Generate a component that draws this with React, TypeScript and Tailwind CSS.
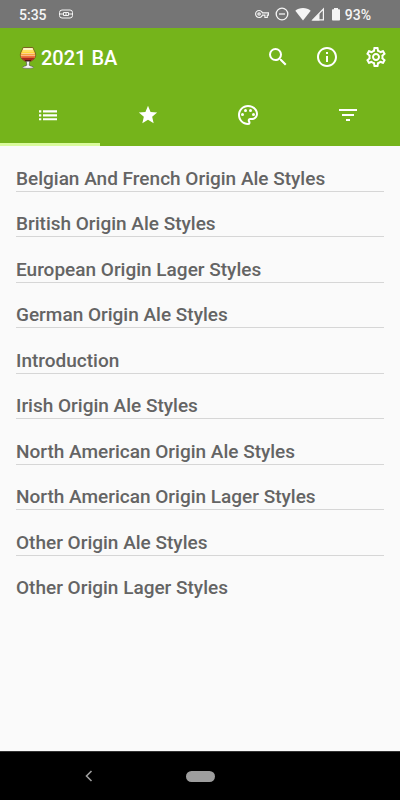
import type { ReactNode } from 'react';
import {
  MdFilterList,
  MdInfoOutline,
  MdOutlinePalette,
  MdOutlineSettings,
  MdOutlineVpnKey,
  MdSearch,
  MdStar,
} from 'react-icons/md';

const styleGroups = [
  'Belgian And French Origin Ale Styles',
  'British Origin Ale Styles',
  'European Origin Lager Styles',
  'German Origin Ale Styles',
  'Introduction',
  'Irish Origin Ale Styles',
  'North American Origin Ale Styles',
  'North American Origin Lager Styles',
  'Other Origin Ale Styles',
  'Other Origin Lager Styles',
];

const ListIcon = () => (
  <svg width="24" height="24" viewBox="0 0 24 24" fill="currentColor" aria-hidden="true">
    <path d="M3 7.300h2.300v2.100H3zM3 11.300h2.300v2.100H3zM3 15.200h2.300v2.100H3z" />
    <path d="M7 7.300h14v2.100H7zM7 11.300h14v2.100H7zM7 15.200h14v2.100H7z" />
  </svg>
);

const tabs = [
  { label: 'List', icon: <ListIcon /> },
  { label: 'Favorites', icon: <MdStar size={22} /> },
  { label: 'Colors', icon: <MdOutlinePalette size={24} /> },
  { label: 'Filter', icon: <MdFilterList size={24} /> },
];

const BeerGlass = () => (
  <svg width="18" height="24" viewBox="0 0 18 24" aria-hidden="true">
    <path
      d="M4.200 1.500h9.600c.7 2.500 2.900 4.500 2.900 7.500 0 3.300-2.600 5.600-5.700 6.500H7c-3.100-.9-5.700-3.200-5.700-6.500 0-3 2.200-5 2.900-7.500z"
      fill="#ffd83a"
      stroke="#6b4a24"
      strokeWidth="0.8"
    />
    <path d="M4.500 2h9l.6 2H3.900z" fill="#fff6c4" />
    <path d="M2.200 7h13.600l.5 2.400H1.700z" fill="#f9a23c" />
    <path d="M1.700 9.400h14.600l-.7 2.400H2.400z" fill="#ec5f36" />
    <path d="M2.400 11.800h13.200c-.9 1.400-1.700 2-2.900 2.600H5.300c-1.200-.6-2-1.200-2.900-2.600z" fill="#a8281f" />
    <path d="M5.300 14h7.400l-1.700 1.500H7z" fill="#4c120e" />
    <path d="M3.500 5h11M2.500 7.500h13M2 9.700h14" stroke="#fff1c9" strokeWidth="0.6" />
    <path
      d="M7.300 15.200h3.400l-.5 4c1 1.100 4.300 1 4.300 2.200 0 1.300-11 1.300-11 0 0-1.200 3.300-1.100 4.300-2.200z"
      fill="#f7f7f7"
      stroke="#4a4a4a"
      strokeWidth="0.6"
    />
  </svg>
);

const StatusBar = () => (
  <div className="flex h-7 items-center bg-[#757575] pl-[19px] pr-[29px] text-[#f5f5f5]">
    <span className="pt-px text-sm font-medium">5:35</span>
    <svg className="ml-3" width="14" height="10" viewBox="0 0 14 10" fill="none" stroke="currentColor">
      <rect x="0.500" y="1" width="13" height="8" rx="2.500" />
      <path d="M1 5h3M10 5h3M4.500 3.500h5v3h-5zM7 3.500v3" />
    </svg>
    <div className="ml-auto flex items-center">
      <MdOutlineVpnKey size={14} />
      <svg className="ml-1.5" width="14" height="14" viewBox="0 0 14 14" fill="none" stroke="currentColor" strokeWidth="1.300">
        <circle cx="7" cy="7" r="5.800" />
        <path d="M4 7h6" />
      </svg>
      <svg className="ml-1.5" width="16" height="14" viewBox="0 0 16 14" fill="currentColor">
        <path d="M8 13.500L.3 3.800C2.300 2 5 1 8 1s5.700 1 7.700 2.800z" />
      </svg>
      <svg width="14" height="14" viewBox="0 0 14 14">
        <path d="M1.800 12.900L12.400 2v10.900z" fill="none" stroke="currentColor" strokeWidth="1.200" />
        <path d="M1 13.500L8.500 6v7.500z" fill="currentColor" />
      </svg>
      <svg className="ml-1.5" width="10" height="14" viewBox="0 0 10 14" fill="currentColor">
        <path d="M3 1h4v1.300h1.200c.5 0 .8.3.8.8v9.600c0 .5-.3.800-.8.800H1.800c-.5 0-.8-.3-.8-.8V3.100c0-.5.300-.8.8-.8H3z" />
      </svg>
      <span className="ml-1 pt-px text-sm font-medium">93%</span>
    </div>
  </div>
);

const ActionButton = ({ label, children }: { label: string; children: ReactNode }) => (
  <button type="button" aria-label={label} className="flex h-12 w-[49px] items-center justify-center">
    {children}
  </button>
);

const App = () => {
  return (
    <div className="flex min-h-screen flex-col bg-[#fafafa] font-['Roboto',sans-serif]">
      <StatusBar />

      <header className="bg-[#75b41b] text-white">
        <div className="flex h-[58px] items-center pl-[19px]">
          <h1 className="flex items-center gap-1 pt-0.5 text-xl font-medium">
            <BeerGlass />
            2021 BA
          </h1>
          <div className="ml-auto flex">
            <ActionButton label="Search">
              <MdSearch size={24} />
            </ActionButton>
            <ActionButton label="Info">
              <MdInfoOutline size={24} />
            </ActionButton>
            <ActionButton label="Settings">
              <MdOutlineSettings size={24} />
            </ActionButton>
          </div>
        </div>

        <nav className="grid h-[60px] grid-cols-4">
          {tabs.map((tab, index) => (
            <button
              key={tab.label}
              type="button"
              aria-label={tab.label}
              className={`flex items-center justify-center border-b-3 pr-1 ${
                index === 0 ? 'border-[#d9fb9c]' : 'border-transparent'
              }`}
            >
              {tab.icon}
            </button>
          ))}
        </nav>
      </header>

      <main className="flex-1 px-4">
        <ul className="grid min-h-[455px] auto-rows-fr">
          {styleGroups.map((group) => (
            <li
              key={group}
              className="flex items-end border-b border-[#d6d6d6] text-[19px] leading-6 font-medium text-[#646464] last:border-transparent"
            >
              {group}
            </li>
          ))}
        </ul>
      </main>

      {/* System navigation */}
      <footer className="grid h-[49px] grid-cols-[93px_1fr_93px] items-center border-t border-[#333333] bg-black">
        <button type="button" aria-label="Back" className="flex justify-end">
          <svg width="8" height="12" viewBox="0 0 8 12" fill="none" stroke="#9e9e9e" strokeWidth="1.600">
            <path d="M6.500 1L1.500 6l5 5" />
          </svg>
        </button>
        <button
          type="button"
          aria-label="Home"
          className="h-[11px] w-[29px] justify-self-center rounded-full bg-[#9e9e9e]"
        />
      </footer>
    </div>
  );
};

export default App;
